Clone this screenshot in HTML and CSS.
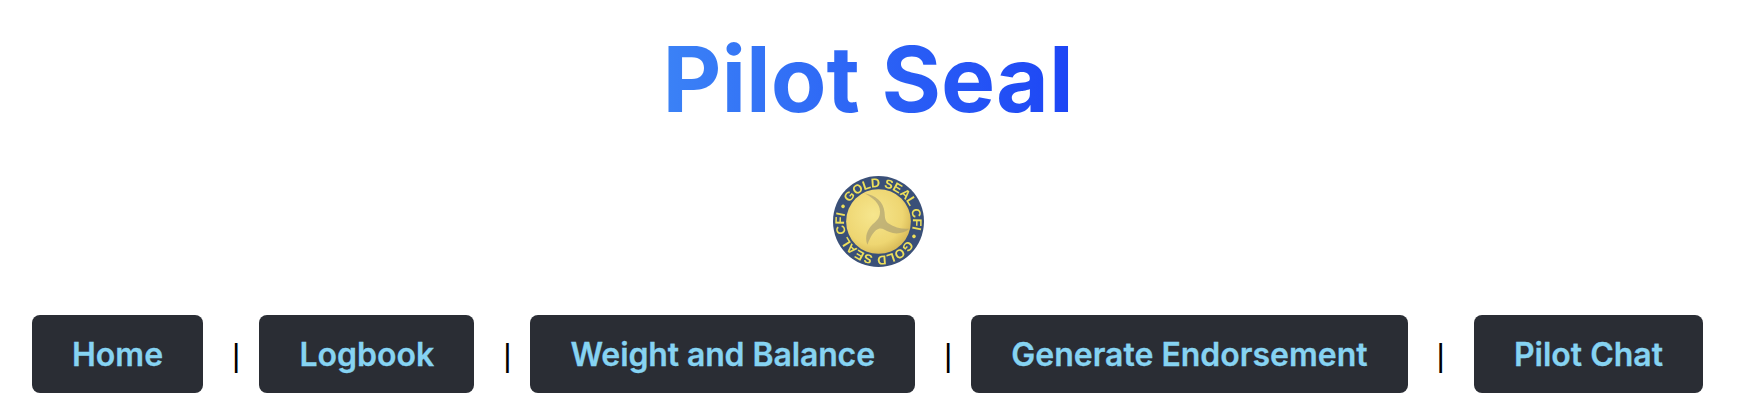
FILE: index.html
```html
<!DOCTYPE html>
<html lang="en">
<head>
    <meta charset="UTF-8" />
    <title>Pilot Seal</title>
    <meta name="viewport" content="width=device-width, initial-scale=1" />
    <link rel="stylesheet" href="styles.css">
</head>
<body>
    <header class="header">
        <h1 class="title">Pilot Seal</h1>
        <svg class="seal" viewBox="0 0 90 90" role="img" aria-label="CFI Gold Seal">
            <defs>
                <radialGradient id="disc" cx="0.42" cy="0.4" r="0.7">
                    <stop offset="0" stop-color="#f6e68e"/>
                    <stop offset="0.65" stop-color="#eed672"/>
                    <stop offset="1" stop-color="#cfae4c"/>
                </radialGradient>
                <path id="ring" d="M11 45a34 34 0 1 1 68 0a34 34 0 1 1 -68 0"/>
            </defs>
            <circle cx="45" cy="45" r="45" fill="#3a5078"/>
            <circle cx="45" cy="45" r="32" fill="url(#disc)"/>
            <path class="swirl" d="M31 17C42 19 50 25 51 36 51.500 41 51 44 55 47 61 51 69 53 76 52 70 57 62 58 56 55.500 52 54 49 51.500 46 52 41 53 37 60 34 68 31 60 34 53 39 48 43 44 46.500 42 46.500 35 46.500 27 39 21 31 17Z"/>
            <g transform="rotate(-20 45 45)">
                <text class="seal-text" textLength="210" lengthAdjust="spacing">
                    <textPath href="#ring">CFI • GOLD SEAL CFI • GOLD SEAL</textPath>
                </text>
            </g>
        </svg>
    </header>
    <nav class="nav">
        <a class="nav-btn" href="#">Home</a>
        <span class="sep">|</span>
        <a class="nav-btn" href="#">Logbook</a>
        <span class="sep">|</span>
        <a class="nav-btn nav-btn-tight" href="#">Weight and Balance</a>
        <span class="sep">|</span>
        <a class="nav-btn" href="#">Generate Endorsement</a>
        <span class="sep sep-last">|</span>
        <a class="nav-btn" href="#">Pilot Chat</a>
    </nav>
</body>
</html>
```

FILE: styles.css
```css
body {
    margin: 0;
    background: #fff;
    font-family: Inter, "Liberation Sans", sans-serif;
}
.header {
    display: flex;
    flex-direction: column;
    align-items: center;
    padding-top: 29px;
}
.title {
    margin: 0 12px 0 0;
    font-size: 91px;
    line-height: 100px;
    font-weight: 700;
    background: linear-gradient(90deg, #3b82f6, #1d45f5);
    -webkit-background-clip: text;
    background-clip: text;
    color: transparent;
}
.seal {
    width: 91px;
    height: 91px;
    margin: 47px 0 0 8px;
    filter: blur(0.4px);
}
.swirl {
    fill: #a99d70;
    opacity: 0.65;
}
.seal-text {
    font-family: "Liberation Sans", sans-serif;
    font-size: 12.5px;
    font-weight: 700;
    fill: #eee05a;
}
.nav {
    display: flex;
    align-items: baseline;
    margin-top: 48px;
    padding-left: 32px;
}
.nav-btn {
    display: block;
    padding: 0 40px;
    height: 78px;
    line-height: 80px;
    border-radius: 8px;
    background: #2a2d34;
    color: #86d3f2;
    font-size: 32px;
    font-weight: 600;
    -webkit-text-stroke: 0.3px #86d3f2;
    text-decoration: none;
}
.nav-btn-tight {
    letter-spacing: -0.12px;
}
.sep {
    margin: 0 19px 0 29px;
    font-family: "Liberation Sans", sans-serif;
    font-size: 32px;
    color: #000;
}
.sep-last {
    margin: 0 29px;
}
```
